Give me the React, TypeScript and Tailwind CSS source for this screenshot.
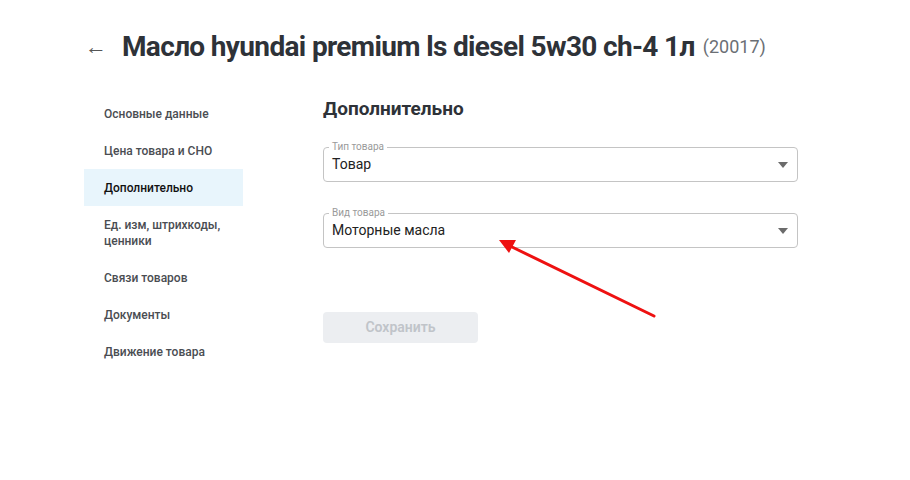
import React from 'react';

const menu = [
  'Основные данные',
  'Цена товара и СНО',
  'Дополнительно',
  'Ед. изм, штрихкоды, ценники',
  'Связи товаров',
  'Документы',
  'Движение товара',
];

const SelectField = ({ label, value }: { label: string; value: string }) => (
  <div className="relative h-[35px] w-[475px] rounded-[4px] border border-[#c4c4c4] flex items-center pl-[8px] pr-[9px]">
    <span className="absolute -top-[7px] left-[5px] bg-white px-[3px] text-[10px] leading-[12px] text-[#9a9a9a]">{label}</span>
    <span className="flex-1 text-[14px] text-[#222]">{value}</span>
    <svg width="10" height="6" viewBox="0 0 10 6">
      <path d="M0 0 L10 0 L5 6 Z" fill="#6b6b6b" />
    </svg>
  </div>
);

export default function App() {
  return (
    <div className="relative w-[910px] h-[480px] bg-white font-['Roboto',sans-serif]">
      {/* header */}
      <div className="h-[95px] pl-[85px] pt-[30px] flex items-start">
        <div className="flex items-center h-[34px]">
          <span className="text-[22px] leading-[34px] text-[#555] w-[37px]">←</span>
          <h1 className="text-[28px] leading-[34px] font-bold text-[#2e3238] tracking-[-0.65px]">
            Масло hyundai premium ls diesel 5w30 ch-4 1л
          </h1>
          <span className="ml-[8px] text-[18px] leading-[34px] text-[#6b6f75]">(20017)</span>
        </div>
      </div>

      <div className="flex">
        {/* sidebar */}
        <div className="ml-[84px] w-[159px] flex flex-col">
          {menu.map((item) => (
            <div
              key={item}
              className={
                item === 'Дополнительно'
                  ? 'py-[10.5px] pl-[20px] pr-[10px] text-[12px] leading-[16px] font-medium bg-[#e8f5fc] text-[#111]'
                  : 'py-[10.5px] pl-[20px] pr-[10px] text-[12px] leading-[16px] font-medium text-[#4a4d52]'
              }
            >
              {item}
            </div>
          ))}
        </div>

        {/* content */}
        <div className="ml-[80px] flex flex-col">
          <h2 className="mt-[2px] text-[19px] leading-[24px] font-bold text-[#2e3238]">Дополнительно</h2>
          <div className="mt-[26px] flex flex-col gap-[31px]">
            <SelectField label="Тип товара" value="Товар" />
            <SelectField label="Вид товара" value="Моторные масла" />
          </div>
          <button
            type="button"
            className="mt-[64px] h-[31px] w-[155px] rounded-[4px] bg-[#eceef1] text-[14px] font-semibold text-[#c0c4c9]"
          >
            Сохранить
          </button>
        </div>
      </div>

      {/* annotation arrow */}
      <svg className="absolute left-0 top-0 pointer-events-none" width="910" height="480">
        <line x1="654" y1="316" x2="510" y2="246" stroke="#ee1111" strokeWidth="3" strokeLinecap="round" />
        <path d="M499 240 L516 240 L509 253 Z" fill="#ee1111" />
      </svg>
    </div>
  );
}
